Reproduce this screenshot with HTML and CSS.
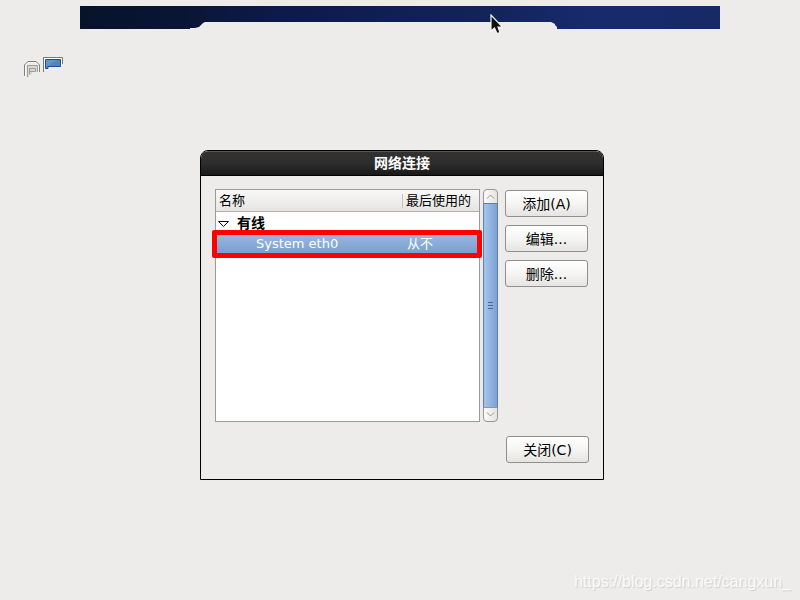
FILE: index.html
```html
<!DOCTYPE html>
<html lang="zh-CN">
<head>
<meta charset="utf-8">
<title>网络连接</title>
<link rel="stylesheet" href="styles.css">
</head>
<body>
<header class="banner">
  <svg class="banner-art" viewBox="0 0 640 23" preserveAspectRatio="none" aria-hidden="true">
    <defs>
      <linearGradient id="night" x1="0" x2="1" y1="0" y2="0">
        <stop offset="0" stop-color="#07122b"/>
        <stop offset=".16" stop-color="#0a1535"/>
        <stop offset=".3" stop-color="#0c1a48"/>
        <stop offset=".65" stop-color="#13245a"/>
        <stop offset=".8" stop-color="#172b6c"/>
        <stop offset="1" stop-color="#172a66"/>
      </linearGradient>
    </defs>
    <path fill="url(#night)" d="M0 0H640V23H477V21L475 19V18L473 17L471 16H125L123 17L121 19L119 21L115 22H110V23H0Z"/>
  </svg>
  <svg class="pointer" viewBox="0 0 13 21" aria-hidden="true">
    <path d="M1 1V17L4.500 14L7 19.500L10 18.500L8 13H12.500Z" fill="#111" stroke="#f4f4f4" stroke-width="1.200"/>
  </svg>
</header>

<div class="desktop-icons" aria-hidden="true">
  <svg class="icon-panel" viewBox="0 0 17 18">
    <path d="M.5 16V5L4 1.500H12L15.500 5V12" fill="#ececea" stroke="#7c7e79"/>
    <path d="M1.500 16V5.500L4.500 2.500H11.500L14.500 5.500V12" fill="none" stroke="#fff"/>
    <path d="M3 17V5.500H14V12H8V14.500H5V17Z" fill="#d6d7d1"/>
    <path d="M3.500 17V5.500H13.500V12M5.500 14.500V8.500H11.500V11.500H5.500" fill="none" stroke="#9c9e96"/>
  </svg>
  <svg class="icon-screen" viewBox="0 0 20 16">
    <path d="M.5 15V.5H19.500V7" fill="none" stroke="#777974"/>
    <path d="M1.500 14V1.500H18.500V9" fill="none" stroke="#fff"/>
    <path d="M2.500 11.500V2.500H17.500V9.500H5V11.500Z" fill="#4e85c5" stroke="#204e8c"/>
    <path d="M3 3H15Q8 5 6 9H3Z" fill="#729fcf" opacity=".6"/>
  </svg>
</div>

<main class="stage">
  <section class="dialog" aria-labelledby="dialog-title">
    <h1 class="titlebar" id="dialog-title">网络连接</h1>
    <div class="content">
      <div class="columns">
        <div class="list">
          <table class="tree">
            <thead>
              <tr><th class="name">名称</th><th class="used">最后使用的</th></tr>
            </thead>
            <tbody>
              <tr class="group">
                <td colspan="2"><svg class="expander" viewBox="0 0 13 8" aria-hidden="true"><path d="M1.500 1.500H11.500L6.500 6.500Z" fill="#fff" stroke="#111"/></svg>有线</td>
              </tr>
              <tr class="selected"><td class="device">System eth0</td><td class="last">从不</td></tr>
            </tbody>
          </table>
        </div>
        <div class="scrollbar">
          <button class="step" type="button" aria-label="向上"><svg viewBox="0 0 9 5" aria-hidden="true"><path d="M1 4.500L4.500 1L8 4.500"/></svg></button>
          <div class="thumb"><span class="grip"></span></div>
          <button class="step" type="button" aria-label="向下"><svg viewBox="0 0 9 5" aria-hidden="true"><path d="M1 .5L4.500 4L8 .5"/></svg></button>
        </div>
        <div class="actions">
          <button class="button" type="button">添加(A)</button>
          <button class="button" type="button">编辑...</button>
          <button class="button" type="button">删除...</button>
        </div>
      </div>
      <div class="footer">
        <button class="button" type="button">关闭(C)</button>
      </div>
    </div>
  </section>
</main>

<footer class="watermark">https://blog.csdn.net/cangxun_</footer>
</body>
</html>
```

FILE: styles.css
```css
* {
  box-sizing: border-box;
}

body {
  margin: 0;
  min-height: 100vh;
  display: flex;
  flex-direction: column;
  background: #edeceb;
  color: #000;
  font: 13px/20px "DejaVu Sans", "Noto Sans CJK SC", sans-serif;
}

svg {
  display: block;
}

.banner {
  position: relative;
  margin: 6px 10% 0;
}

.banner-art {
  width: 100%;
  height: 23px;
}

.pointer {
  position: absolute;
  left: 64%;
  top: 8px;
  width: 13px;
  height: 21px;
}

.desktop-icons {
  display: flex;
  gap: 2px;
  padding: 28px 24px 0;
}

.icon-panel {
  width: 17px;
  height: 18px;
  margin-top: 3px;
}

.icon-screen {
  width: 20px;
  height: 16px;
}

.stage {
  flex: 1;
  display: flex;
  justify-content: center;
  align-items: flex-start;
  padding: 72px 0 24px 4px;
}

.dialog {
  width: 404px;
  border: 1px solid #000;
  border-radius: 8px 8px 0 0;
  overflow: hidden;
}

.titlebar {
  margin: 0;
  height: 25px;
  border-top: 1px solid #555;
  border-bottom: 1px solid #000;
  background: linear-gradient(#323232, #2d2d2d 50%, #191919);
  color: #fff;
  font-size: 14px;
  line-height: 23px;
  font-weight: 700;
  text-align: center;
}

.content {
  padding: 13px 14px 16px;
}

.columns {
  display: flex;
}

.list {
  flex: 1;
  height: 233px;
  border: 1px solid #9c9b98;
  background: #fff;
}

.tree {
  width: 100%;
  border-collapse: separate;
  border-spacing: 0;
  table-layout: fixed;
}

.tree th,
.tree td {
  padding: 0;
  height: 21px;
  text-align: left;
  white-space: nowrap;
}

.tree th {
  height: 22px;
  padding: 0 3px;
  border-bottom: 1px solid #b0afac;
  background: linear-gradient(#f8f8f7, #e6e5e3);
  font-weight: 400;
}

.tree .used {
  width: 77px;
  padding-left: 4px;
  background: linear-gradient(#c5c4c1, #c5c4c1) 0 4px / 1px 14px no-repeat, linear-gradient(#f8f8f7, #e6e5e3);
}

.group td {
  font-size: 14px;
  font-weight: 700;
}

.expander {
  display: inline-block;
  width: 13px;
  height: 8px;
  margin: 0 7px 0 1px;
}

.selected {
  position: relative;
  background: linear-gradient(#9cbae2, #789dce);
  color: #fff;
}

.device::after {
  content: "";
  position: absolute;
  inset: -3px -3px -4px -4px;
  border: 5px solid #fe0000;
  border-radius: 2px;
}

.tree .device {
  padding-left: 40px;
}

.tree .last {
  padding-left: 5px;
}

.scrollbar {
  display: flex;
  flex-direction: column;
  width: 15px;
  margin: 0 7px 0 3px;
}

.step {
  display: flex;
  align-items: center;
  justify-content: center;
  height: 15px;
  padding: 0;
  border: 1px solid #979693;
  border-radius: 4px 4px 0 0;
  background: linear-gradient(90deg, #fbfbfa, #e4e3e1);
}

.step:last-child {
  border-radius: 0 0 4px 4px;
}

.step svg {
  width: 9px;
  height: 5px;
  fill: none;
  stroke: #999895;
}

.thumb {
  flex: 1;
  display: flex;
  align-items: center;
  justify-content: center;
  margin: -1px 0;
  border: 1px solid #5f7fa9;
  background: linear-gradient(90deg, #a7c4eb, #7ca2d4);
}

.grip {
  width: 5px;
  height: 7px;
  background: repeating-linear-gradient(#49688f 0 1px, transparent 1px 3px);
}

.actions {
  display: flex;
  flex-direction: column;
  gap: 8px;
  padding: 1px 1px 0 0;
}

.button {
  width: 83px;
  height: 27px;
  padding: 0;
  border: 1px solid #918f8c;
  border-radius: 3px;
  background: linear-gradient(#fff, #f5f5f4 50%, #e5e4e2);
  color: #000;
  font: inherit;
  font-size: 14px;
}

.footer {
  display: flex;
  justify-content: flex-end;
  padding-top: 14px;
}

.watermark {
  padding: 0 9px 8px;
  color: #fafafa;
  font: 16px/20px "Liberation Sans", sans-serif;
  text-align: right;
  text-shadow: 1px 1px 1px #cfcecd;
}
```
